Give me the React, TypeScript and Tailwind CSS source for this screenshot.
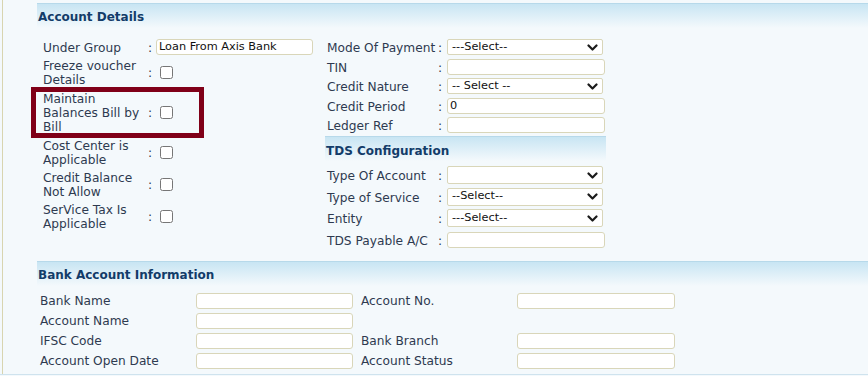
import React from 'react';

const Chevron = () => (
  <svg width="11" height="7" viewBox="0 0 11 7" className="shrink-0">
    <path d="M1.5 1.5 L5.5 5.5 L9.5 1.5" fill="none" stroke="#1a1a1a" strokeWidth="2.2" strokeLinecap="round" strokeLinejoin="round" />
  </svg>
);

const TextBox = ({ value = '', w = 'w-[158px]' }: { value?: string; w?: string }) => (
  <div className={`${w} h-[16px] rounded-[3px] border border-[#d9d6b9] bg-white pl-[2px] text-[11.3px] leading-[14px] text-[#111]`}>
    {value}
  </div>
);

const SelectBox = ({ value = '', h = 'h-[16px]' }: { value?: string; h?: string }) => (
  <div className={`w-[156px] ${h} flex items-center justify-between rounded-[2px] border border-[#d9d6b9] bg-white pl-[4px] pr-[4px] text-[11.3px] text-[#111]`}>
    <span>{value}</span>
    <Chevron />
  </div>
);

const CheckBox = () => (
  <input type="checkbox" className="m-0 ml-[4px] h-[13px] w-[13px]" readOnly />
);

const LeftRow = ({ label, children, className = '' }: { label: React.ReactNode; children: React.ReactNode; className?: string }) => (
  <div className={`flex items-center ${className}`}>
    <div className="w-[102px] pt-[2px] leading-[14px]">{label}</div>
    <div className="w-[10px] pt-[2px] text-center">:</div>
    <div className="ml-[1px] flex items-center">{children}</div>
  </div>
);

const RightRow = ({ label, children, h = 'h-[19.5px]' }: { label: string; children: React.ReactNode; h?: string }) => (
  <div className={`flex items-center ${h}`}>
    <div className="w-[110px] pl-[2px] pt-[3px] whitespace-nowrap">{label}</div>
    <div className="w-[10px] pt-[3px] text-center">:</div>
    <div className="ml-[2px] flex items-center">{children}</div>
  </div>
);

const Band = ({ title, className = '' }: { title: string; className?: string }) => (
  <div className={`h-[25px] border-t border-[#b7d9ea] bg-linear-to-b from-[#c8e5f3] to-[#f4f9fc] pl-[1px] pt-[1px] text-[12px] font-bold leading-[24px] text-[#123c69] ${className}`}>
    {title}
  </div>
);

export default function App() {
  return (
    <div className="flex h-[376px] w-[868px] flex-col overflow-hidden bg-[#f4f9fc] font-['DejaVu_Sans',Verdana,sans-serif] text-[12.2px] text-[#2e3a50]">
      <div className="ml-[2px] h-[374px] border-l border-[#d8d5b0] bg-[#f4f9fc] pl-[34px]">
        <Band title="Account Details" className="mt-[3px]" />

        <div className="flex h-[233px]">
          {/* left column */}
          <div className="w-[288px] pl-[6px] pt-[9px]">
            <LeftRow label="Under Group" className="h-[20px]">
              <TextBox value="Loan From Axis Bank" w="w-[157px]" />
            </LeftRow>
            <LeftRow label={<>Freeze voucher<br />Details</>} className="mt-[1px] h-[28px]">
              <CheckBox />
            </LeftRow>
            <div className="relative mt-[5px]">
              <LeftRow label={<>Maintain<br />Balances Bill by<br />Bill</>} className="h-[42px]">
                <CheckBox />
              </LeftRow>
              <div className="pointer-events-none absolute left-[-12px] top-[-4px] h-[51px] w-[173px] border-[5px] border-[#800018]" />
            </div>
            <LeftRow label={<>Cost Center is<br />Applicable</>} className="mt-[5px] h-[28px]">
              <CheckBox />
            </LeftRow>
            <LeftRow label={<>Credit Balance<br />Not Allow</>} className="mt-[4px] h-[28px]">
              <CheckBox />
            </LeftRow>
            <LeftRow label={<>SerVice Tax Is<br />Applicable</>} className="mt-[4px] h-[28px]">
              <CheckBox />
            </LeftRow>
          </div>

          {/* right column */}
          <div className="w-[281px] pt-[9.25px]">
            <RightRow label="Mode Of Payment">
              <SelectBox value="---Select--" />
            </RightRow>
            <RightRow label="TIN">
              <TextBox />
            </RightRow>
            <RightRow label="Credit Nature">
              <SelectBox value="-- Select --" />
            </RightRow>
            <RightRow label="Credit Period">
              <TextBox value="0" />
            </RightRow>
            <RightRow label="Ledger Ref">
              <TextBox />
            </RightRow>
            <Band title="TDS Configuration" className="mt-[0.75px] pt-[2px]" />
            <div className="mt-[3.75px]">
              <RightRow label="Type Of Account" h="h-[21.5px]">
                <SelectBox h="h-[18px]" />
              </RightRow>
              <RightRow label="Type of Service" h="h-[21.5px]">
                <SelectBox value="--Select--" h="h-[18px]" />
              </RightRow>
              <RightRow label="Entity" h="h-[21.5px]">
                <SelectBox value="---Select--" h="h-[18px]" />
              </RightRow>
              <RightRow label="TDS Payable A/C" h="h-[21.5px]">
                <TextBox />
              </RightRow>
            </div>
          </div>
        </div>

        <Band title="Bank Account Information" />
        <div className="mt-[5px] grid grid-cols-[156px_157px_164px_158px] pl-[3px]">
          {[
            ['Bank Name', 'Account No.'],
            ['Account Name', ''],
            ['IFSC Code', 'Bank Branch'],
            ['Account Open Date', 'Account Status'],
          ].map(([a, b], i) => (
            <React.Fragment key={i}>
              <div className="flex h-[20px] items-center">{a}</div>
              <div className="flex h-[20px] items-center">
                <TextBox w="w-[157px]" />
              </div>
              <div className="flex h-[20px] items-center pl-[8px]">{b}</div>
              <div className="flex h-[20px] items-center">{b && <TextBox w="w-[158px]" />}</div>
            </React.Fragment>
          ))}
        </div>
      </div>
      <div className="h-[1px] w-full bg-[#cfe3ee]" />
    </div>
  );
}
